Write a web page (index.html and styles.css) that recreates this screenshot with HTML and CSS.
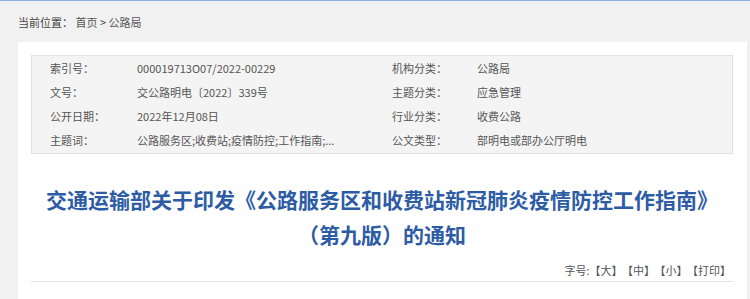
FILE: index.html
```html
<!doctype html>
<html lang="zh-CN">
<head>
    <meta charset="UTF-8">
    <title>交通运输部关于印发《公路服务区和收费站新冠肺炎疫情防控工作指南》（第九版）的通知</title>
    <link rel="stylesheet" href="styles.css">
</head>
<body>
    <div class="crumb">当前位置： <a href="#">首页</a> &gt; <a href="#">公路局</a></div>

    <div class="panel">
        <div class="info">
            <span class="label">索引号：</span>
            <span class="value">000019713O07/2022-00229</span>
            <span class="label">机构分类：</span>
            <span class="value">公路局</span>

            <span class="label">文号：</span>
            <span class="value">交公路明电〔2022〕339号</span>
            <span class="label">主题分类：</span>
            <span class="value">应急管理</span>

            <span class="label">公开日期：</span>
            <span class="value">2022年12月08日</span>
            <span class="label">行业分类：</span>
            <span class="value">收费公路</span>

            <span class="label">主题词：</span>
            <span class="value">公路服务区;收费站;疫情防控;工作指南;...</span>
            <span class="label">公文类型：</span>
            <span class="value">部明电或部办公厅明电</span>
        </div>

        <h1 class="title">交通运输部关于印发《公路服务区和收费站新冠肺炎疫情防控工作指南》<br>（第九版）的通知</h1>

        <div class="tools">字号:<a href="#">【大】</a><a href="#">【中】</a><a href="#">【小】</a><a href="#">【打印】</a></div>
    </div>
</body>
</html>
```

FILE: styles.css
```css
body {
    font-family: "Microsoft YaHei", "Noto Sans CJK SC", sans-serif;
    font-size: 11px;
    color: #555;
    margin: 0;
    padding: 0;
    background-color: #f1f1f1;
    border-top: 1px solid #8cb1e6;
}

a {
    color: #555;
    text-decoration: none;
}

.crumb {
    padding: 11px 18px 0;
    height: 20px;
    line-height: 20px;
    color: #444;
}

.panel {
    margin: 10px 3px 0 18px;
    padding: 13px 14px 30px 13px;
    background-color: #fff;
}

.info {
    display: grid;
    grid-template-columns: 87px 255px 85px 1fr;
    grid-auto-rows: 24px;
    padding: 0 0 1px 18px;
    border: 1px solid #e0e0e0;
    background-color: #f4f4f4;
    line-height: 24px;
    white-space: nowrap;
}

.title {
    margin: 28px 0 0;
    font-size: 21px;
    line-height: 35px;
    font-weight: bold;
    color: #2d5ca5;
    text-align: center;
}

.tools {
    margin-top: 9px;
    padding: 0 2px 2px 0;
    line-height: 18px;
    text-align: right;
    border-bottom: 1px solid #e3e3e3;
}

.tools a + a {
    margin-left: 5px;
}
```
